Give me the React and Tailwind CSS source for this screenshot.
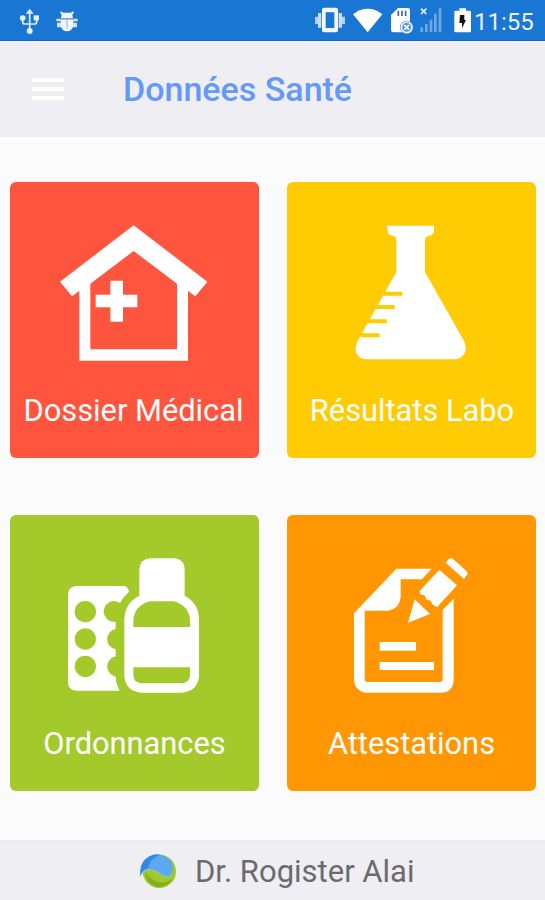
const UsbIcon = () => (
  <svg className="h-[41px] w-[23px]" viewBox="54 0 69 123" fill="none" stroke="#e4effb" strokeWidth="5">
    <path d="M89 36V90M68 55V66Q68 72 74 72H104Q110 72 110 66V55" />
    <g fill="#e4effb" stroke="none">
      <path d="M89 26l12 15H77z" />
      <circle cx="68" cy="54" r="8.5" />
      <rect x="101" y="46" width="16" height="15" />
      <circle cx="89" cy="93" r="9" />
    </g>
  </svg>
);

const BugIcon = () => (
  <svg className="ml-[14px] h-[41px] w-[25px]" viewBox="165 0 75 123" fill="#f0f6fd">
    <path d="M182 34l8 4h22l8-4 1 5-4 5 2 11h-36l2-11-4-5z" />
    <path d="M182 58H220V76Q217 94 201 94T182 76z" />
    <path d="M169 56h13v8h-13zM220 56h13v8h-13zM171 68h60v14h-60z" opacity=".85" />
    <path d="M184 57H218M201 58V86" stroke="#8fb0de" strokeWidth="3" />
  </svg>
);

const VibrateIcon = () => (
  <svg className="h-[41px] w-[32px]" viewBox="42 0 96 123" fill="#f4f8fe">
    <path fillRule="evenodd" d="M72 23H108Q114 23 114 29V91Q114 97 108 97H72Q66 97 66 91V29Q66 23 72 23zM77 37V84H103V37z" />
    <path d="M54 39h10v44h-10zM116 39h10v44h-10z" opacity=".8" />
    <path d="M45 50h9v22h-9zM126 50h9v22h-9z" opacity=".7" />
  </svg>
);

const WifiIcon = () => (
  <svg className="ml-[6px] h-[41px] w-[31px]" viewBox="156 0 93 123" fill="#fff">
    <path d="M203 97L159 43Q178 26 203 26T247 43z" />
  </svg>
);

const SdIcon = () => (
  <svg className="ml-[7px] h-[41px] w-[25px]" viewBox="270 0 75 123">
    <path d="M294 24H323Q330 24 330 31V90Q330 97 323 97H280Q273 97 273 90V45z" fill="#fff" />
    <path d="M295 32V48M306 32V48M317 32V48" stroke="#3a62bd" strokeWidth="5" />
    <circle cx="320" cy="82" r="20" fill="#4a8bd8" />
    <circle cx="320" cy="82" r="16" fill="#5795dc" stroke="#e8f1fc" strokeWidth="5" />
    <path d="M313 75l14 14M327 75l-14 14" stroke="#fff" strokeWidth="5" />
  </svg>
);

const SignalIcon = () => (
  <svg className="ml-[4px] h-[41px] w-[24px]" viewBox="357 0 72 123" fill="#6fa8e5">
    <path d="M361 82h8v14h-8zM375 72h8v24h-8zM389 59h8v37h-8zM402 41h8v55h-8zM416 25h8v71h-8z" />
    <path d="M363 26l16 16M379 26l-16 16" stroke="#e8f1fc" strokeWidth="5" />
  </svg>
);

const BatteryIcon = () => (
  <svg className="ml-[10px] h-[41px] w-[19px]" viewBox="459 0 57 123">
    <path d="M478 25H498V32H509Q513 32 513 36V93Q513 97 509 97H467Q463 97 463 93V36Q463 32 467 32H478z" fill="#fff" />
    <path d="M480 45H493V60H498L486 84V69H478z" fill="#111" />
  </svg>
);

const HouseIcon = () => (
  <svg className="h-[140px] w-[161px]" viewBox="162 144 483 420" fill="#fff">
    <path d="M401 151L622 320L586 364L564 348V557H238V348L216 364L180 320zM401 228L271 326V523H531V326z" fillRule="evenodd" />
    <path d="M331 317H369V359H412V397H369V440H331V397H287V359H331z" />
  </svg>
);

const FlaskIcon = () => (
  <svg className="h-[140px] w-[161px]" viewBox="153 144 483 420">
    <path fill="#fff" d="M321 152H462V166Q461 180 449 182Q435 184 435 194V291L552 498Q562 519 553 536Q544 552 522 553H260Q238 551 230 536Q222 521 233 498L349 291V194Q349 184 337 182Q323 180 322 166z" />
    <path d="M310 356H367M288 396H344M264 439H320M242 481H299" stroke="#ffcb02" strokeWidth="12" />
  </svg>
);

const MedicineIcon = () => (
  <svg className="h-[140px] w-[161px]" viewBox="162 153 483 420" fill="#fff">
    <path d="M229 243H371Q383 243 387 260Q370 275 360 294A31 31 0 1 0 347 350V372A31 31 0 0 0 347 433V454A31 31 0 0 0 347 515Q348 538 359 557H229Q204 556 204 531V269Q204 245 229 243z" />
    <g fill="#a4c92b">
      <circle cx="256" cy="320" r="32" />
      <circle cx="256" cy="402" r="32" />
      <circle cx="256" cy="484" r="32" />
    </g>
    <path fillRule="evenodd" d="M450 160H521Q554 162 554 195V272Q597 294 597 345V514Q593 559 546 563H424Q377 559 373 514V345Q374 294 418 272V195Q420 162 450 160zM400 366H570V343Q565 300 520 289H450Q406 300 400 343zM400 487V512Q403 532 423 535H547Q567 532 570 512V487z" />
  </svg>
);

const DocumentIcon = () => (
  <svg className="h-[140px] w-[161px]" viewBox="153 153 483 420" fill="#fff">
    <path fillRule="evenodd" d="M349 191H455L426 223H362V276Q359 312 325 317H254V522Q254 531 263 531H479Q488 531 488 522V315L521 281V524Q520 559 487 563H254Q225 557 222 526V325z" />
    <path d="M299 411H408V437H299zM299 471H462V495H299z" />
    <path d="M478 194L531 241L471 307L457 298L452 287L440 284L434 271L422 269L418 259z" />
    <path d="M404 283L450 327L384 353z" />
    <path d="M506 162Q514 157 522 164L559 198Q566 204 560 211L552 222L497 173z" />
  </svg>
);

const GlobeIcon = () => (
  <svg className="h-[36px] w-[38px]" viewBox="57 66 114 108">
    <circle cx="118" cy="121" r="50" fill="#a0c92a" />
    <path d="M75 122Q77 154 108 167Q145 171 162 139Q135 164 107 150Q85 140 75 122z" fill="#83ae20" />
    <path d="M62 138Q55 96 86 77Q125 58 153 91Q165 115 151 136Q136 142 117 126Q90 109 71 121Q63 126 62 138z" fill="#5da9ef" />
    <path d="M62 138Q55 96 86 77Q104 68 120 72Q90 81 84 112Q65 115 62 138z" fill="#3388df" />
    <path d="M68 123Q90 106 119 127Q139 143 153 133" fill="none" stroke="#b9dcef" strokeWidth="1.5" />
  </svg>
);

const cards = [
  { label: "Dossier Médical", color: "bg-[#ff543d]", Icon: HouseIcon, text: "-ml-[2px]" },
  { label: "Résultats Labo", color: "bg-[#ffcb02]", Icon: FlaskIcon, text: "ml-[1px]" },
  { label: "Ordonnances", color: "bg-[#a4c92b]", Icon: MedicineIcon, text: "" },
  { label: "Attestations", color: "bg-[#ff9602]", Icon: DocumentIcon, text: "" },
];

export default function App() {
  return (
    <div className="flex h-[900px] w-[545px] flex-col overflow-hidden bg-[#fbfbfb] font-['Roboto',sans-serif]">
      <div className="flex h-[41px] shrink-0 items-center border-b border-[#1567bd] bg-[#1976d2] pl-[18px]">
        <UsbIcon />
        <BugIcon />
        <div className="ml-[234px] flex items-center">
          <VibrateIcon />
          <WifiIcon />
          <SdIcon />
          <SignalIcon />
          <BatteryIcon />
          <span className="ml-[2px] mt-[3px] text-[24px] leading-none text-[#e8f1fc]">11:55</span>
        </div>
      </div>
      <header className="flex h-[96px] shrink-0 items-center bg-[#efeef3] pl-8">
        <div className="flex w-8 flex-col gap-[5px]">
          <span className="h-1 bg-white" />
          <span className="h-1 bg-white" />
          <span className="h-1 bg-white" />
        </div>
        <h1 className="-mt-px ml-[59px] text-[34px] font-medium leading-none text-[#6399fa]">Données Santé</h1>
      </header>
      <main className="grid grid-cols-[249px_249px] gap-x-7 gap-y-[57px] pl-[10px] pt-[45px]">
        {cards.map(({ label, color, Icon, text }) => (
          <div key={label} className={`flex h-[276px] flex-col items-center rounded-md pt-[41px] ${color}`}>
            <Icon />
            <span className={`mt-[30px] whitespace-nowrap text-[30.8px] leading-[36px] text-white ${text}`}>{label}</span>
          </div>
        ))}
      </main>
      <footer className="mt-auto flex h-[60px] shrink-0 items-center border-t border-[#ececef] bg-[#efeef3] pl-[139px]">
        <GlobeIcon />
        <span className="ml-[18px] mt-[2px] text-[31px] leading-none text-[#6b6b6e]">Dr. Rogister Alai</span>
      </footer>
    </div>
  );
}
